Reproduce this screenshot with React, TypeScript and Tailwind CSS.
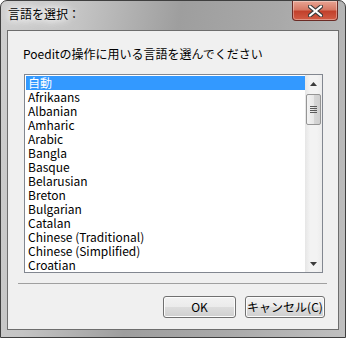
import React from "react";

const items = [
  "自動",
  "Afrikaans",
  "Albanian",
  "Amharic",
  "Arabic",
  "Bangla",
  "Basque",
  "Belarusian",
  "Breton",
  "Bulgarian",
  "Catalan",
  "Chinese (Traditional)",
  "Chinese (Simplified)",
  "Croatian",
];

const font = { fontFamily: '"Noto Sans CJK JP", "Noto Sans", sans-serif' };

function CloseButton() {
  return (
    <div className="absolute right-[7px] top-0 w-[46px] h-[20px] rounded-b-[4px] border border-t-0 border-[#6b2b25] bg-[linear-gradient(#e8a493_0%,#d77a66_45%,#c2412c_55%,#d25c45_100%)] flex items-center justify-center shadow-[inset_0_0_0_1px_rgba(255,255,255,0.35)]">
      <svg width="15" height="12" viewBox="0 0 15 12">
        <path d="M2 1.5 L13 10.5 M13 1.5 L2 10.5" stroke="#3b3b3b" strokeWidth="4.2" strokeLinecap="round" />
        <path d="M2 1.5 L13 10.5 M13 1.5 L2 10.5" stroke="#ffffff" strokeWidth="2.2" strokeLinecap="round" />
      </svg>
    </div>
  );
}

function Scrollbar() {
  return (
    <div className="w-[17px] h-full bg-[linear-gradient(90deg,#e6e6e6,#f3f3f3_30%,#f3f3f3_70%,#ececec)] flex flex-col items-center">
      <div className="h-[17px] w-full flex items-center justify-center">
        <svg width="7" height="4" viewBox="0 0 7 4"><path d="M3.5 0 L7 4 L0 4 Z" fill="#3c3c3c" /></svg>
      </div>
      <div className="mt-[2px] w-[15px] h-[31px] rounded-[2px] border border-[#959595] bg-[linear-gradient(90deg,#f3f3f3,#e8e8e8_50%,#d6d6d6_55%,#cfcfcf)] flex flex-col items-center justify-center gap-[1px]">
        <div className="w-[7px] h-[1px] bg-[#5a5a5a]" />
        <div className="w-[7px] h-[1px] bg-[#5a5a5a]" />
        <div className="w-[7px] h-[1px] bg-[#5a5a5a]" />
        <div className="w-[7px] h-[1px] bg-[#5a5a5a]" />
      </div>
      <div className="flex-1" />
      <div className="h-[17px] w-full flex items-center justify-center">
        <svg width="7" height="4" viewBox="0 0 7 4"><path d="M0 0 L7 0 L3.5 4 Z" fill="#3c3c3c" /></svg>
      </div>
    </div>
  );
}

function Button({ label, w }: { label: string; w: string }) {
  return (
    <div
      className={`${w} h-[22px] rounded-[3px] border border-[#707070] bg-[linear-gradient(#f2f2f2_0%,#ebebeb_50%,#dddddd_50%,#cfcfcf_100%)] shadow-[inset_0_0_0_1px_#fcfcfc] flex items-center justify-center text-[12px] text-black`}
    >
      {label}
    </div>
  );
}

export default function App() {
  return (
    <div className="w-[346px] h-[338px] bg-white" style={font}>
      <div className="relative w-[346px] h-[338px] rounded-t-[7px] border border-[#3f3f3f] bg-[linear-gradient(100deg,#cfcfcf_0%,#c4c4c4_20%,#9e9e9e_45%,#a9a9a9_70%,#c0c0c0_100%)] flex flex-col overflow-hidden">
        <div className="h-[29px] flex items-center pl-[7px]">
          <span className="text-[12px] text-black [text-shadow:0_0_6px_#ffffff,0_0_10px_#ffffff,0_0_14px_#ffffff] -mt-[3px]">
            言語を選択：
          </span>
        </div>
        <CloseButton />
        <div className="mx-[6px] h-[300px] border border-[#6d6d6d] bg-[#f0f0f0] flex flex-col">
          <div className="pl-[15px] pt-[15px] text-[12px] leading-[16px] text-black">
            Poeditの操作に用いる言語を選んでください
          </div>
          <div className="ml-[16px] mt-[12px] w-[299px] h-[199px] border border-[#828790] bg-white flex">
            <div className="flex-1 pt-[1px] pl-[1px]">
              {items.map((it, i) => (
                <div
                  key={it}
                  className={`h-[14px] leading-[14px] pl-[2px] text-[12px] whitespace-nowrap ${
                    i === 0 ? "bg-[#3399ff] text-white" : "text-black"
                  }`}
                >
                  {it}
                </div>
              ))}
            </div>
            <Scrollbar />
          </div>
          <div className="ml-[10px] mt-[10px] w-[309px] h-[1px] bg-[#a0a0a0]" />
          <div className="flex justify-end gap-[9px] pr-[13px] mt-[12px]">
            <Button label="OK" w="w-[73px]" />
            <Button label="キャンセル(C)" w="w-[80px]" />
          </div>
        </div>
      </div>
    </div>
  );
}
